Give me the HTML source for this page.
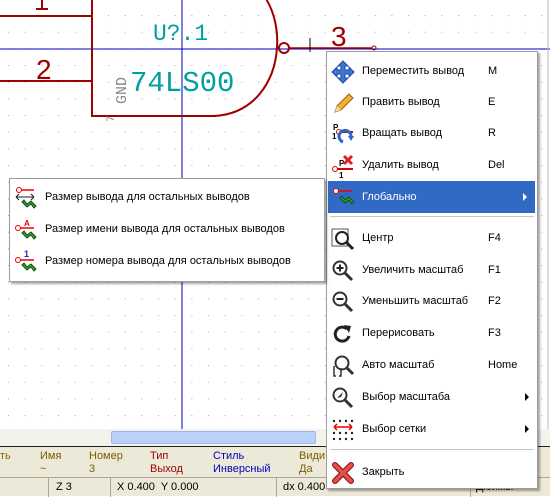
<!DOCTYPE html>
<html><head><meta charset="utf-8"><style>
*{margin:0;padding:0;box-sizing:border-box}
body{width:550px;height:496px;overflow:hidden;position:relative;background:#fff;font-family:"Liberation Sans",Tahoma,sans-serif;font-size:11px;color:#000}
.abs{position:absolute}
.menu{position:absolute;background:#fff;border:1px solid #9d9d9d;box-shadow:2px 2px 2px rgba(0,0,0,.35)}
.it{position:absolute;left:0;right:0;height:32px;line-height:32px}
.it .t{position:absolute;left:35px}
.it .k{position:absolute;left:161px}
.it svg{position:absolute;left:4px;top:5px}
.sep{position:absolute;left:3px;right:3px;height:1px;background:#c5c5c5}
.arr{position:absolute;right:8px;top:12px;width:0;height:0;border-left:4px solid #000;border-top:4px solid transparent;border-bottom:4px solid transparent}
</style></head><body>
<svg class="abs" style="left:0;top:0" width="550" height="430">
<defs><pattern id="g" x="8" y="15" width="16.67" height="16.67" patternUnits="userSpaceOnUse"><rect width="1" height="1" fill="#aaa"/></pattern></defs>
<rect width="550" height="430" fill="url(#g)"/>
<line x1="0" y1="49" x2="550" y2="49" stroke="#0000c8"/>
<line x1="182" y1="0" x2="182" y2="430" stroke="#0000c8"/>
<g stroke="#a00000" stroke-width="2" fill="none">
<line x1="0" y1="16" x2="92" y2="16"/><line x1="0" y1="81" x2="92" y2="81"/>
<line x1="92" y1="0" x2="92" y2="117"/><line x1="92" y1="116" x2="216" y2="116"/>
<path d="M232 -25 C 295 -15, 295 112, 214 116"/>
<circle cx="284" cy="48" r="5"/><line x1="289" y1="48" x2="372" y2="48" stroke-width="1.5"/>
<circle cx="374" cy="48" r="2" stroke-width="1"/>
<line x1="36" y1="9" x2="48" y2="9"/><line x1="42" y1="0" x2="42" y2="9"/>
</g>
<text x="36" y="79" font-family="Liberation Sans,sans-serif" font-size="28" fill="#a00000">2</text>
<text x="331" y="46" font-family="Liberation Sans,sans-serif" font-size="28" fill="#a00000">3</text>
<text x="153" y="40" font-family="Liberation Mono,monospace" font-size="23" fill="#00a0a0">U?.1</text>
<text x="130" y="91" font-family="Liberation Mono,monospace" font-size="29" fill="#00a0a0">74LS00</text>
<text transform="translate(126,104) rotate(-90)" font-family="Liberation Mono,monospace" font-size="15" fill="#888">GND</text>
<text transform="translate(114,122) rotate(-90)" font-family="Liberation Mono,monospace" font-size="11" fill="#888">7</text>
<line x1="310" y1="38" x2="310" y2="52" stroke="#000"/>
<line x1="548" y1="0" x2="548" y2="430" stroke="#bbb"/>
</svg>
<div class="abs" style="left:0;top:429px;width:550px;height:17px;background:#f3f3ee"></div>
<div class="abs" style="left:111px;top:431px;width:205px;height:13px;background:#bcd1f7;border:1px solid #9fb6e6;border-radius:2px"></div>
<div class="abs" style="left:0;top:446px;width:550px;height:1px;background:#222"></div>
<div class="abs" style="left:0;top:447px;width:550px;height:30px;background:#ece9d8;line-height:13px;font-size:11px">
<div class="abs" style="left:0;top:3px;color:#8a6a00">ть</div>
<div class="abs" style="left:40px;top:3px;color:#7a6000">Имя<br>~</div>
<div class="abs" style="left:89px;top:3px;color:#7a6000">Номер<br>3</div>
<div class="abs" style="left:150px;top:3px;color:#a00000">Тип<br>Выход</div>
<div class="abs" style="left:213px;top:3px;color:#0000c0">Стиль<br>Инверсный</div>
<div class="abs" style="left:299px;top:3px;color:#7a6000">Види<br>Да</div>
</div>
<div class="abs" style="left:0;top:477px;width:550px;height:19px;background:#ece9d8;border-top:1px solid #aca899;line-height:18px">
<div class="abs" style="left:48px;top:0;height:19px;border-left:1px solid #aca899;padding-left:7px">Z 3</div>
<div class="abs" style="left:110px;top:0;height:19px;border-left:1px solid #aca899;padding-left:6px">X 0.400&nbsp; Y 0.000</div>
<div class="abs" style="left:276px;top:0;height:19px;border-left:1px solid #aca899;padding-left:6px">dx 0.400</div>
<div class="abs" style="left:470px;top:0;height:19px;border-left:1px solid #aca899;padding-left:5px">Дюймы</div>
</div>

<div class="menu" style="left:326px;top:51px;width:212px;height:438px">
<div class="it" style="top:3px"><svg width="24" height="24"><path d="M12 1l5 5h-3v4h4V7l5 5-5 5v-3h-4v4h3l-5 5-5-5h3v-4H6v3l-5-5 5-5v3h4V6H7z" fill="#3f78d8" stroke="#1c4a9c"/></svg><span class="t">Переместить вывод</span><span class="k">M</span></div>
<div class="it" style="top:34px"><svg width="24" height="24"><path d="M4 21l2-6 12-12 4 4L10 19z" fill="#f0b030" stroke="#9a6010"/><path d="M4 21l2-6 4 4z" fill="#f4d8a0"/></svg><span class="t">Править вывод</span><span class="k">E</span></div>
<div class="it" style="top:65px"><svg width="24" height="26"><text x="2" y="8" font-size="8" font-weight="bold">P</text><text x="1" y="17" font-size="8" font-weight="bold">1</text><line x1="6" y1="10" x2="22" y2="10" stroke="#d00" stroke-width="2"/><circle cx="8" cy="10" r="2.5" fill="#fff" stroke="#d00"/><path d="M12 20a6 6 0 1 1 8 -6" fill="none" stroke="#2a6ad0" stroke-width="3"/><path d="M17 14l6 0-3 5z" fill="#2a6ad0"/></svg><span class="t">Вращать вывод</span><span class="k">R</span></div>
<div class="it" style="top:97px"><svg width="24" height="26"><text x="8" y="12" font-size="8" font-weight="bold">P</text><text x="8" y="24" font-size="8" font-weight="bold">1</text><line x1="3" y1="15" x2="22" y2="15" stroke="#d00" stroke-width="2"/><circle cx="4" cy="15" r="2.5" fill="#fff" stroke="#d00"/><path d="M13 2l8 8M21 2l-8 8" stroke="#e02020" stroke-width="3"/></svg><span class="t">Удалить вывод</span><span class="k">Del</span></div>
<div class="it" style="top:129px;left:1px;right:2px;background:#316ac5;color:#fff"><svg width="24" height="24"><line x1="3" y1="5" x2="20" y2="5" stroke="#e00" stroke-width="1.5"/><circle cx="4" cy="5" r="2.5" fill="#fff" stroke="#e00"/><path d="M8 12l5 5 4-3 3 4 2-2-5-5-4 3-3-4z" fill="#30a030" stroke="#105010"/></svg><span class="t" style="left:34px">Глобально</span><span class="arr" style="border-left-color:#fff"></span></div>
<div class="sep" style="top:164px"></div>
<div class="it" style="top:170px"><svg width="26" height="26"><path d="M1 2h16v17H1z" fill="#fff" stroke="#555"/><circle cx="11" cy="11" r="6" fill="#fff" stroke="#222" stroke-width="2"/><line x1="15" y1="15" x2="22" y2="22" stroke="#222" stroke-width="3"/></svg><span class="t">Центр</span><span class="k">F4</span></div>
<div class="it" style="top:202px"><svg width="24" height="24"><circle cx="9" cy="9" r="6.5" fill="#fff" stroke="#333" stroke-width="2"/><path d="M5.5 9h7M9 5.5v7" stroke="#222" stroke-width="2"/><line x1="14" y1="14" x2="21" y2="21" stroke="#333" stroke-width="3"/></svg><span class="t">Увеличить масштаб</span><span class="k">F1</span></div>
<div class="it" style="top:233px"><svg width="24" height="24"><circle cx="9" cy="9" r="6.5" fill="#fff" stroke="#333" stroke-width="2"/><path d="M5.5 9h7" stroke="#222" stroke-width="2"/><line x1="14" y1="14" x2="21" y2="21" stroke="#333" stroke-width="3"/></svg><span class="t">Уменьшить масштаб</span><span class="k">F2</span></div>
<div class="it" style="top:265px"><svg width="24" height="24"><path d="M16 7a7 7 0 1 0 2 7" fill="none" stroke="#222" stroke-width="3"/><path d="M13 3l7 1-2 7z" fill="#222"/></svg><span class="t">Перерисовать</span><span class="k">F3</span></div>
<div class="it" style="top:297px"><svg width="24" height="26"><circle cx="11" cy="9" r="6.5" fill="#fff" stroke="#333" stroke-width="2"/><line x1="16" y1="14" x2="22" y2="20" stroke="#333" stroke-width="3"/><path d="M3 12v10h2M10 14v8h-2" fill="none" stroke="#333" stroke-width="1.5"/></svg><span class="t">Авто масштаб</span><span class="k">Home</span></div>
<div class="it" style="top:329px"><svg width="24" height="24"><circle cx="9" cy="9" r="6.5" fill="#fff" stroke="#333" stroke-width="2"/><path d="M6 12l6-6-2 5z" fill="#333"/><line x1="14" y1="14" x2="21" y2="21" stroke="#333" stroke-width="3"/></svg><span class="t">Выбор масштаба</span><span class="arr"></span></div>
<div class="it" style="top:361px"><svg width="24" height="24"><g fill="#222"><circle cx="3" cy="3" r="1.2"/><circle cx="9" cy="3" r="1.2"/><circle cx="15" cy="3" r="1.2"/><circle cx="21" cy="3" r="1.2"/><circle cx="3" cy="15" r="1.2"/><circle cx="9" cy="15" r="1.2"/><circle cx="15" cy="15" r="1.2"/><circle cx="21" cy="15" r="1.2"/><circle cx="3" cy="21" r="1.2"/><circle cx="9" cy="21" r="1.2"/><circle cx="15" cy="21" r="1.2"/><circle cx="21" cy="21" r="1.2"/></g><path d="M3 9h18M3 9l3-3M3 9l3 3M21 9l-3-3M21 9l-3 3" stroke="#e00" stroke-width="1.5" fill="none"/></svg><span class="t">Выбор сетки</span><span class="arr"></span></div>
<div class="sep" style="top:397px"></div>
<div class="it" style="top:404px"><svg width="24" height="24"><path d="M4 4l16 16M20 4L4 20" stroke="#a01818" stroke-width="6" stroke-linecap="round"/><path d="M4 4l16 16M20 4L4 20" stroke="#e05050" stroke-width="3.5" stroke-linecap="round"/></svg><span class="t">Закрыть</span></div>
</div>

<div class="menu" style="left:9px;top:178px;width:316px;height:104px">
<div class="it" style="top:2px"><svg width="24" height="24"><line x1="5" y1="4" x2="20" y2="4" stroke="#e00" stroke-width="1.5"/><circle cx="5" cy="4" r="2.5" fill="#fff" stroke="#e00"/><path d="M2 11h18M2 11l3-3M2 11l3 3M20 11l-3-3M20 11l-3 3" stroke="#222" fill="none"/><path d="M8 16l5 5 4-3 3 4 2-2-5-5-4 3-3-4z" fill="#30a030" stroke="#105010"/></svg><span class="t">Размер вывода для остальных выводов</span></div>
<div class="it" style="top:34px"><svg width="24" height="24"><text x="10" y="8" font-size="8" font-weight="bold" fill="#e00">A</text><line x1="3" y1="10" x2="20" y2="10" stroke="#e00" stroke-width="1.5"/><circle cx="4" cy="10" r="2.5" fill="#fff" stroke="#e00"/><path d="M8 15l5 5 4-3 3 4 2-2-5-5-4 3-3-4z" fill="#30a030" stroke="#105010"/></svg><span class="t">Размер имени вывода для остальных выводов</span></div>
<div class="it" style="top:66px"><svg width="24" height="24"><text x="10" y="7" font-size="9" font-weight="bold" fill="#22c">1</text><line x1="3" y1="10" x2="20" y2="10" stroke="#e00" stroke-width="1.5"/><circle cx="4" cy="10" r="2.5" fill="#fff" stroke="#e00"/><path d="M8 15l5 5 4-3 3 4 2-2-5-5-4 3-3-4z" fill="#30a030" stroke="#105010"/></svg><span class="t">Размер номера вывода для остальных выводов</span></div>
</div>
</body></html>
